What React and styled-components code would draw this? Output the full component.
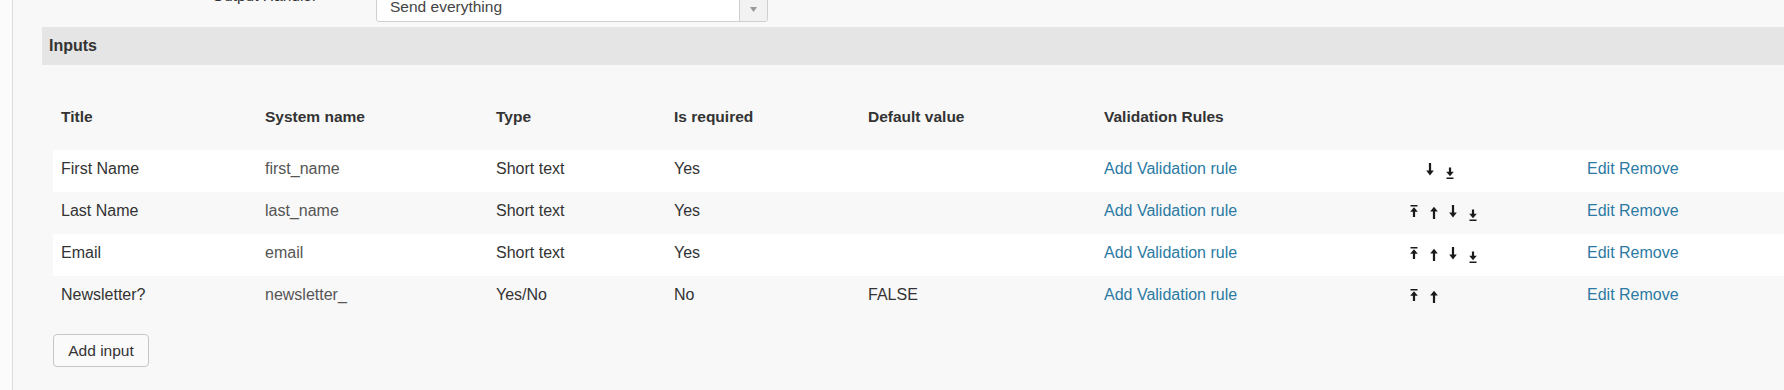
import React from 'react';
import styled, { createGlobalStyle } from 'styled-components';

const GlobalStyle = createGlobalStyle`
  body {
    margin: 0;
    background: #f8f8f8;
    font-family: "Liberation Sans", Arial, sans-serif;
    color: #333;
    overflow: hidden;
  }
`;

const Page = styled.div`
  display: flex;
  min-height: 100vh;
`;

const Gutter = styled.div`
  width: 12px;
  flex-shrink: 0;
  background: #fbfbfb;
  border-right: 1px solid #dcdcdc;
`;

const Main = styled.div`
  flex: 1;
  padding-left: 29px;
  background: #f8f8f8;
`;

const FormRow = styled.div`
  display: flex;
  align-items: flex-start;
  margin-top: -14px;
  padding-left: 170px;
`;

const Label = styled.label`
  width: 164px;
  font-size: 15.5px;
  line-height: 20px;
  color: #333;
`;

const Select = styled.div`
  margin-top: 2px;
  width: 392px;
  height: 34px;
  box-sizing: border-box;
  display: flex;
  background: #fff;
  border: 1px solid #cfcfcf;
  border-radius: 3px;
  overflow: hidden;
`;

const SelectValue = styled.span`
  flex: 1;
  padding-left: 13px;
  font-size: 15.5px;
  line-height: 36px;
  color: #444;
`;

const SelectArrow = styled.span`
  width: 27px;
  display: flex;
  align-items: center;
  justify-content: center;
  padding-top: 8px;
  background: #f2f2f2;
  border-left: 1px solid #cfcfcf;
`;

const SectionBar = styled.div`
  margin-top: 5px;
  height: 38px;
  padding-left: 7px;
  display: flex;
  align-items: center;
  background: #e5e5e5;
  font-size: 16px;
  font-weight: bold;
  color: #333;
`;

const Table = styled.div`
  margin-left: 11px;
`;

const columns = '204px 231px 178px 194px 236px 306px 177px 1fr';

const Cell = styled.div`
  padding-left: 8px;
  color: ${p => (p.$muted ? '#555' : '#333')};
  white-space: nowrap;
`;

const HeadRow = styled.div`
  display: grid;
  grid-template-columns: ${columns};
  padding: 42px 0 23px;
  line-height: 20px;
  font-size: 15.5px;
  font-weight: bold;
  color: #333;
`;

const Row = styled.div`
  display: grid;
  grid-template-columns: ${columns};
  align-items: center;
  height: 42px;
  line-height: 20px;
  font-size: 16px;
  background: ${p => (p.$striped ? 'transparent' : '#fff')};

  & > ${Cell} {
    margin-bottom: 4px;
  }
`;

const Link = styled.a`
  color: #2b7aa3;
  text-decoration: none;
  cursor: pointer;
`;

const Arrows = styled.div`
  display: flex;
  gap: 11.5px;
  padding-left: ${p => 8 + (p.$indent || 0)}px;
`;

const ArrowButton = styled.svg`
  width: 8px;
  height: 18px;
  display: block;
  fill: #1a1a1a;
`;

const AddButton = styled.button`
  margin: 16px 0 0 11px;
  width: 96px;
  height: 33px;
  border: 1px solid #c6c6c6;
  border-radius: 4px;
  background: #fafafa;
  font-family: inherit;
  font-size: 15.5px;
  color: #333;
  cursor: pointer;
`;

const arrowShapes = {
  top: (
    <>
      <rect x="0.5" y="1" width="7" height="1.5" />
      <polygon points="4,3.2 7.8,7.8 0.2,7.8" />
      <rect x="2.9" y="7" width="2.2" height="6" />
    </>
  ),
  up: (
    <>
      <polygon points="4,2.8 7.8,7.6 0.2,7.6" />
      <rect x="2.9" y="7" width="2.2" height="8" />
    </>
  ),
  down: (
    <>
      <rect x="2.9" y="1" width="2.2" height="8" />
      <polygon points="0.2,8.4 7.8,8.4 4,13.4" />
    </>
  ),
  bottom: (
    <>
      <rect x="2.9" y="5.5" width="2.2" height="5" />
      <polygon points="0.2,9.8 7.8,9.8 4,14.2" />
      <rect x="0.5" y="15.5" width="7" height="1.5" />
    </>
  ),
};

const Arrow = ({ kind }) => (
  <ArrowButton viewBox="0 0 8 18">{arrowShapes[kind]}</ArrowButton>
);

const inputs = [
  { title: 'First Name', name: 'first_name', type: 'Short text', required: 'Yes', def: '', moves: ['down', 'bottom'], indent: 16 },
  { title: 'Last Name', name: 'last_name', type: 'Short text', required: 'Yes', def: '', moves: ['top', 'up', 'down', 'bottom'] },
  { title: 'Email', name: 'email', type: 'Short text', required: 'Yes', def: '', moves: ['top', 'up', 'down', 'bottom'] },
  { title: 'Newsletter?', name: 'newsletter_', type: 'Yes/No', required: 'No', def: 'FALSE', moves: ['top', 'up'] },
];

export default function App() {
  return (
    <>
      <GlobalStyle />
      <Page>
        <Gutter />
        <Main>
          <FormRow>
            <Label>Output Handler</Label>
            <Select>
              <SelectValue>Send everything</SelectValue>
              <SelectArrow>
                <svg width="7" height="5" viewBox="0 0 7 5">
                  <polygon points="0,0 7,0 3.5,5" fill="#999" />
                </svg>
              </SelectArrow>
            </Select>
          </FormRow>

          <SectionBar>Inputs</SectionBar>

          <Table>
            <HeadRow>
              <Cell>Title</Cell>
              <Cell>System name</Cell>
              <Cell>Type</Cell>
              <Cell>Is required</Cell>
              <Cell>Default value</Cell>
              <Cell>Validation Rules</Cell>
              <Cell />
              <Cell />
            </HeadRow>
            {inputs.map((input, i) => (
              <Row key={input.name} $striped={i % 2 === 1}>
                <Cell>{input.title}</Cell>
                <Cell $muted>{input.name}</Cell>
                <Cell>{input.type}</Cell>
                <Cell>{input.required}</Cell>
                <Cell>{input.def}</Cell>
                <Cell>
                  <Link>Add Validation rule</Link>
                </Cell>
                <Arrows $indent={input.indent}>
                  {input.moves.map(m => (
                    <Arrow key={m} kind={m} />
                  ))}
                </Arrows>
                <Cell>
                  <Link>Edit</Link> <Link>Remove</Link>
                </Cell>
              </Row>
            ))}
          </Table>

          <AddButton>Add input</AddButton>
        </Main>
      </Page>
    </>
  );
}
